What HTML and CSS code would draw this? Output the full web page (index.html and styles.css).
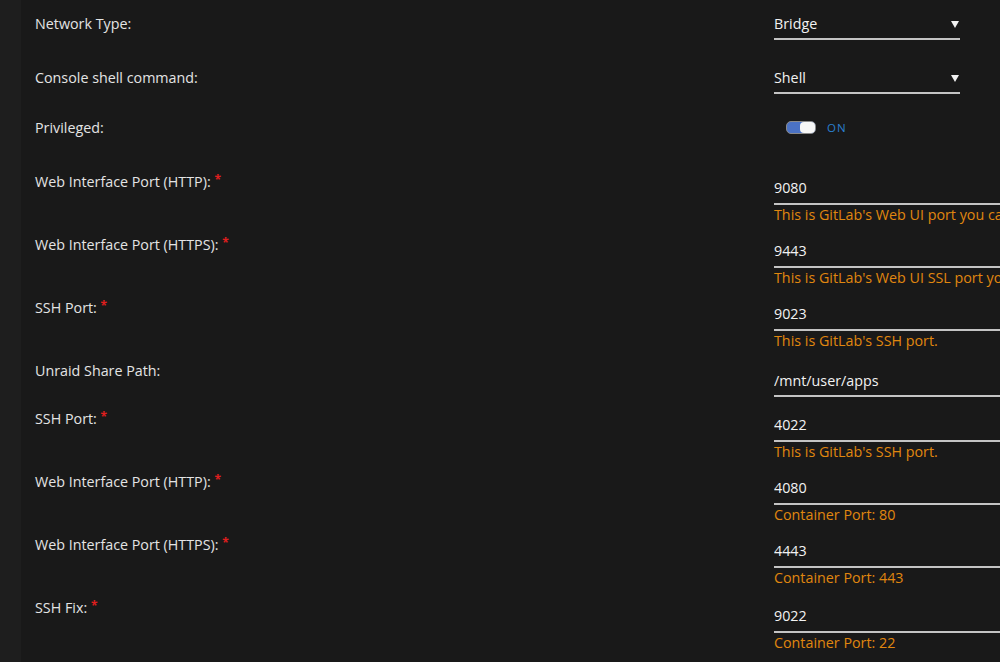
FILE: index.html
```html
<!DOCTYPE html>
<html lang="en">
<head>
    <meta charset="UTF-8">
    <title>Add Container</title>
    <link rel="stylesheet" href="styles.css">
</head>
<body>
<div class="strip"></div>
<div class="content">
    <!-- Basic settings -->
    <div class="row row-select">
        <div class="label">Network Type:</div>
        <div class="field">
            <div class="select"><span>Bridge</span><svg class="caret" width="8" height="7" viewBox="0 0 8 7"><path d="M0 0H8L4 7Z" fill="#f2f2f2"/></svg></div>
        </div>
    </div>
    <div class="row row-select second">
        <div class="label">Console shell command:</div>
        <div class="field">
            <div class="select"><span>Shell</span><svg class="caret" width="8" height="7" viewBox="0 0 8 7"><path d="M0 0H8L4 7Z" fill="#f2f2f2"/></svg></div>
        </div>
    </div>
    <div class="row row-toggle">
        <div class="label">Privileged:</div>
        <div class="field">
            <div class="switch">
                <div class="track"><div class="knob"></div></div>
                <span class="switch-text">ON</span>
            </div>
        </div>
    </div>

    <!-- Ports and paths -->
    <div class="row row-input">
        <div class="label">Web Interface Port (HTTP): <span class="req">*</span></div>
        <div class="field">
            <input class="text" type="text" value="9080">
            <div class="desc">This is GitLab's Web UI port you can access from your browser.</div>
        </div>
    </div>
    <div class="row row-input">
        <div class="label">Web Interface Port (HTTPS): <span class="req">*</span></div>
        <div class="field">
            <input class="text" type="text" value="9443">
            <div class="desc">This is GitLab's Web UI SSL port you can access from your browser.</div>
        </div>
    </div>
    <div class="row row-input">
        <div class="label">SSH Port: <span class="req">*</span></div>
        <div class="field">
            <input class="text" type="text" value="9023">
            <div class="desc">This is GitLab's SSH port.</div>
        </div>
    </div>
    <div class="row row-path">
        <div class="label">Unraid Share Path:</div>
        <div class="field">
            <input class="text" type="text" value="/mnt/user/apps">
        </div>
    </div>
    <div class="row row-input">
        <div class="label">SSH Port: <span class="req">*</span></div>
        <div class="field">
            <input class="text" type="text" value="4022">
            <div class="desc">This is GitLab's SSH port.</div>
        </div>
    </div>
    <div class="row row-input">
        <div class="label">Web Interface Port (HTTP): <span class="req">*</span></div>
        <div class="field">
            <input class="text" type="text" value="4080">
            <div class="desc">Container Port: 80</div>
        </div>
    </div>
    <div class="row row-input">
        <div class="label">Web Interface Port (HTTPS): <span class="req">*</span></div>
        <div class="field">
            <input class="text" type="text" value="4443">
            <div class="desc">Container Port: 443</div>
        </div>
    </div>
    <div class="row row-input low">
        <div class="label">SSH Fix: <span class="req">*</span></div>
        <div class="field">
            <input class="text" type="text" value="9022">
            <div class="desc">Container Port: 22</div>
        </div>
    </div>
</div>
</body>
</html>
```

FILE: styles.css
```css
/* Global styles */
* {
    margin: 0;
    padding: 0;
    box-sizing: border-box;
}

html, body {
    height: 100%;
    overflow: hidden;
}

body {
    display: flex;
    font-family: "Open Sans", "Liberation Sans", sans-serif;
    font-size: 14.3px;
    background-color: #1d1d1d;
    color: #e4e4e4;
}

.strip {
    width: 21px;
    flex-shrink: 0;
    background-color: #1e1e1e;
}

.content {
    flex: 1;
    background-color: #191919;
    padding: 14px 0 0 14px;
}

/* Rows */
.row {
    display: flex;
    align-items: flex-start;
}

.label {
    width: 739px;
    flex-shrink: 0;
    line-height: 20px;
}

.req {
    color: #e01e1e;
    font-size: 12px;
    font-weight: bold;
    position: relative;
    top: -3px;
}

.field {
    flex: 1;
    min-width: 0;
}

.row-select {
    margin-bottom: 28px;
}

.row-select.second {
    margin-bottom: 24px;
}

.row-toggle {
    height: 20px;
    margin-bottom: 34px;
}

.row-input {
    height: 63px;
}

.row-input.low .field {
    padding-top: 2px;
}

.row-path {
    height: 48px;
}

.row-path .field {
    padding-top: 4px;
}

/* Select */
.select {
    width: 186px;
    height: 26px;
    display: flex;
    justify-content: space-between;
    align-items: flex-start;
    line-height: 20px;
    color: #f2f2f2;
    border-bottom: 2px solid #c4c4c4;
}

.caret {
    margin: 7px 1px 0 0;
}

/* Toggle switch */
.switch {
    display: flex;
    align-items: center;
    height: 20px;
    padding-left: 12px;
}

.track {
    width: 30px;
    height: 13px;
    border-radius: 5px;
    background-color: #4b72c4;
    border: 1px solid #8a8a8a;
    display: flex;
    justify-content: flex-end;
    margin-top: -2px;
}

.knob {
    width: 15px;
    height: 11px;
    border-radius: 4px;
    background-color: #f7f7f7;
}

.switch-text {
    margin-left: 11px;
    font-size: 11.5px;
    letter-spacing: 1px;
    color: #2a7fcf;
    margin-top: -2px;
}

/* Text input */
.text {
    display: block;
    width: 400px;
    height: 33px;
    padding: 5px 0 6px 0;
    background: transparent;
    border: none;
    border-bottom: 2px solid #c4c4c4;
    color: #f2f2f2;
    font-family: inherit;
    font-size: 14.3px;
    line-height: 20px;
    outline: none;
}

.row-path .text {
    height: 32px;
    padding: 5px 0 5px 0;
}

.desc {
    color: #e0870f;
    line-height: 20px;
    white-space: nowrap;
}
```
